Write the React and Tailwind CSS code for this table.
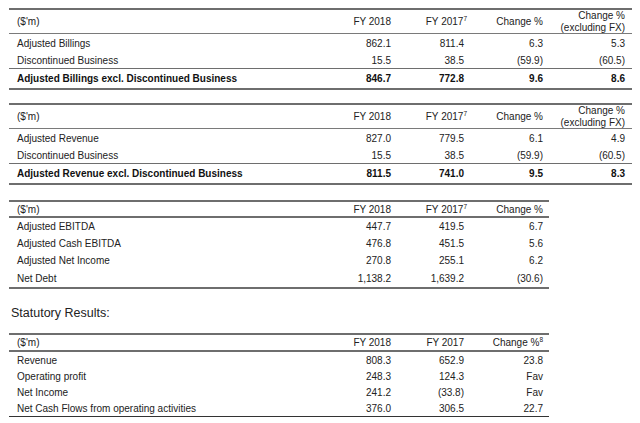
import React from "react";

const font = { fontFamily: '"Liberation Sans", Arial, sans-serif' };

function Cell({ w, children, className = "" }) {
  return (
    <div className={`shrink-0 text-right whitespace-nowrap ${w} ${className}`}>{children}</div>
  );
}

function Sup({ n, hang }) {
  return (
    <sup className={`text-[6.5px] top-[-4px] ${hang ? "-mr-[3px]" : ""}`}>{n}</sup>
  );
}

function Row({ label, vals, cls, bold, four }) {
  return (
    <div className={`flex items-center ${cls} ${bold ? "font-bold text-[#111]" : ""}`}>
      <div className="w-[311px] shrink-0 pl-[8px] whitespace-nowrap">{label}</div>
      <Cell w="w-[71px]">{vals[0]}</Cell>
      <Cell w="w-[73px]">{vals[1]}</Cell>
      <Cell w="w-[79px]">{vals[2]}</Cell>
      {four && <Cell w="w-[82px]">{vals[3]}</Cell>}
    </div>
  );
}

function WideTable({ rows, total, className = "" }) {
  return (
    <div className={`ml-[9px] w-[623px] border-t-2 border-b-2 border-[#6e6e6e] ${className}`}>
      <div className="flex items-center h-[24px] border-b border-[#7a7a7a]">
        <div className="w-[311px] shrink-0 pl-[8px]">($'m)</div>
        <Cell w="w-[71px]">FY 2018</Cell>
        <Cell w="w-[73px]">
          FY 2017<Sup n="7" hang />
        </Cell>
        <Cell w="w-[79px]">Change %</Cell>
        <Cell w="w-[82px]" className="leading-[12px]">
          Change %<br />(excluding FX)
        </Cell>
      </div>
      <Row label={rows[0][0]} vals={rows[0].slice(1)} cls="h-[18px]" four />
      <Row label={rows[1][0]} vals={rows[1].slice(1)} cls="h-[17px] border-b border-[#6e6e6e]" four />
      <Row label={total[0]} vals={total.slice(1)} cls="h-[19px]" bold four />
    </div>
  );
}

export default function App() {
  return (
    <div className="w-[640px] h-[423px] bg-white text-[10px] text-[#222] overflow-hidden" style={font}>
      <div className="h-[8px]" />
      <WideTable
        rows={[
          ["Adjusted Billings", "862.1", "811.4", "6.3", "5.3"],
          ["Discontinued Business", "15.5", "38.5", "(59.9)", "(60.5)"],
        ]}
        total={["Adjusted Billings excl. Discontinued Business", "846.7", "772.8", "9.6", "8.6"]}
      />
      <WideTable
        className="mt-[13px]"
        rows={[
          ["Adjusted Revenue", "827.0", "779.5", "6.1", "4.9"],
          ["Discontinued Business", "15.5", "38.5", "(59.9)", "(60.5)"],
        ]}
        total={["Adjusted Revenue excl. Discontinued Business", "811.5", "741.0", "9.5", "8.3"]}
      />

      <div className="ml-[9px] w-[540px] mt-[15px] border-t-2 border-b-2 border-[#6e6e6e]">
        <div className="flex items-center h-[16px] border-b-2 border-[#6e6e6e]">
          <div className="w-[311px] shrink-0 pl-[8px]">($'m)</div>
          <Cell w="w-[71px]">FY 2018</Cell>
          <Cell w="w-[73px]">
            FY 2017<Sup n="7" hang />
          </Cell>
          <Cell w="w-[79px]">Change %</Cell>
        </div>
        <Row label="Adjusted EBITDA" vals={["447.7", "419.5", "6.7"]} cls="h-[17px]" />
        <Row label="Adjusted Cash EBITDA" vals={["476.8", "451.5", "5.6"]} cls="h-[17px]" />
        <Row label="Adjusted Net Income" vals={["270.8", "255.1", "6.2"]} cls="h-[17px]" />
        <Row label="Net Debt" vals={["1,138.2", "1,639.2", "(30.6)"]} cls="h-[18px]" />
      </div>

      <div className="mt-[17px] ml-[11px] text-[12.5px] leading-[15px] text-[#222]">Statutory Results:</div>

      <div className="ml-[9px] w-[540px] mt-[12px] border-t-2 border-b border-[#6e6e6e] border-b-[#333]">
        <div className="flex items-center h-[17px] border-b-2 border-[#6e6e6e]">
          <div className="w-[311px] shrink-0 pl-[8px]">($'m)</div>
          <Cell w="w-[71px]">FY 2018</Cell>
          <Cell w="w-[73px]">FY 2017</Cell>
          <Cell w="w-[79px]">
            Change %<Sup n="8" />
          </Cell>
        </div>
        <Row label="Revenue" vals={["808.3", "652.9", "23.8"]} cls="h-[16px]" />
        <Row label="Operating profit" vals={["248.3", "124.3", "Fav"]} cls="h-[16px]" />
        <Row label="Net Income" vals={["241.2", "(33.8)", "Fav"]} cls="h-[16px]" />
        <Row label="Net Cash Flows from operating activities" vals={["376.0", "306.5", "22.7"]} cls="h-[16px]" />
      </div>
    </div>
  );
}
